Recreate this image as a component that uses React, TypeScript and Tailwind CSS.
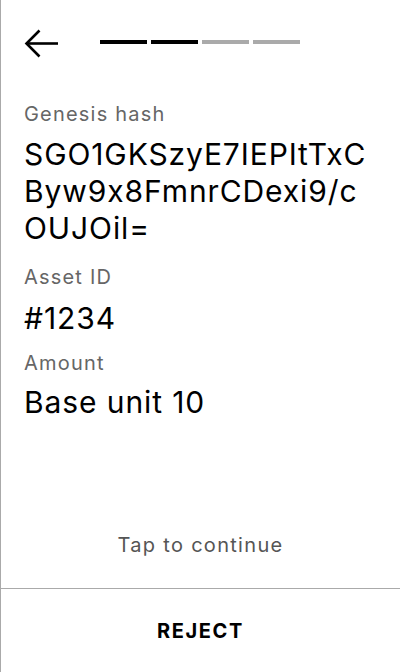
import React from "react";

export default function App() {
  return (
    <div className="w-[400px] h-[672px] bg-white border-l border-[#aaaaaa] flex flex-col text-black font-['Inter','Noto_Sans',sans-serif] [font-variant-ligatures:no-contextual]">
      <div className="flex items-center h-[86px] pl-[23px]">
        <svg width="34" height="29" viewBox="0 0 34 29" fill="none" className="shrink-0 mt-[1px]">
          <path d="M2 14.5H34" stroke="black" strokeWidth="2.6" />
          <path d="M15.5 1.5L2.5 14.5L15.5 27.5" stroke="black" strokeWidth="2.6" />
        </svg>
        <div className="flex gap-[4px] ml-[42px] mb-[2px]">
          <div className="w-[47px] h-[4px] bg-black" />
          <div className="w-[47px] h-[4px] bg-black" />
          <div className="w-[47px] h-[4px] bg-[#aaaaaa]" />
          <div className="w-[47px] h-[4px] bg-[#aaaaaa]" />
        </div>
      </div>
      <div className="flex flex-col pl-[23px] pr-[10px] pt-[14px]">
        <div className="text-[20px] leading-[28px] text-[#666666] tracking-[1.2px]">Genesis hash</div>
        <div className="text-[30px] leading-[37px] mt-[8px] tracking-[0.9px] whitespace-nowrap">
          SGO1GKSzyE7IEPItTxC
          <br />
          Byw9x8FmnrCDexi9/c
          <br />
          OUJOil=
        </div>
        <div className="text-[20px] leading-[28px] text-[#666666] mt-[16px] tracking-[1.2px]">Asset ID</div>
        <div className="text-[30px] leading-[37px] mt-[9px] tracking-[0.9px]">#1234</div>
        <div className="text-[20px] leading-[28px] text-[#666666] mt-[12px] tracking-[1.2px]">Amount</div>
        <div className="text-[30px] leading-[37px] mt-[7px] tracking-[0.9px]">Base unit 10</div>
      </div>
      <div className="flex-1" />
      <div className="text-center text-[20px] leading-[28px] text-[#555555] pb-[29px] tracking-[1.3px]">
        Tap to continue
      </div>
      <div className="h-[1px] bg-[#aaaaaa]" />
      <div className="h-[83px] flex items-center justify-center text-[20px] font-bold tracking-[1.6px]">
        REJECT
      </div>
    </div>
  );
}
